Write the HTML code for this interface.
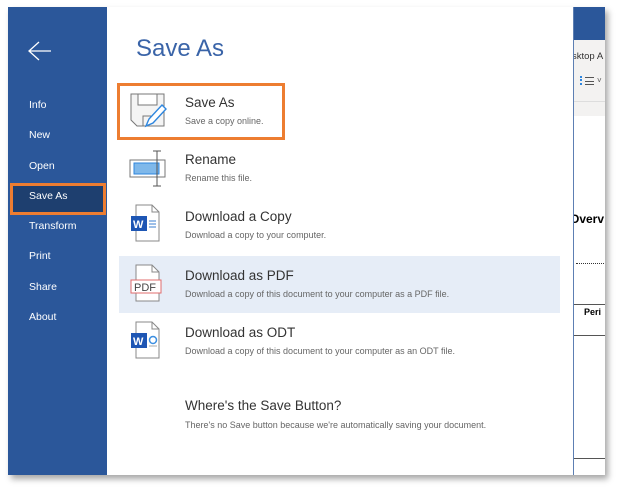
<!DOCTYPE html>
<html><head><style>
*{margin:0;padding:0;box-sizing:border-box}
body{width:617px;height:487px;background:#fff;position:relative;overflow:hidden;font-family:"Liberation Sans",sans-serif}
.frame{position:absolute;left:8px;top:7px;width:597px;height:468px;box-shadow:3px 4px 6px rgba(0,0,0,.35);background:#fff;overflow:hidden}
.side{position:absolute;left:0;top:0;width:99px;height:468px;background:#2b579a}
.side .it{position:absolute;left:21px;color:#fff;font-size:10.5px}
.sel{position:absolute;left:2px;top:176px;width:96px;height:32px;background:#1e3f6f;border:3px solid #ed7d31}
.main{position:absolute;left:99px;top:0;width:466px;height:468px;background:#fff}
h1{position:absolute;left:29px;top:28px;font-weight:normal;font-size:24px;color:#3a64a8}
.row{position:absolute;left:12px;width:441px;height:57px}
.row .t{position:absolute;left:66px;top:12px;font-size:13.5px;color:#333}
.row .s{position:absolute;left:66px;top:33px;font-size:9px;color:#666}
.right{position:absolute;left:565px;top:0;width:32px;height:468px;background:#fff;border-left:1px solid #5d7fb3;overflow:hidden}
</style></head><body>
<div class="frame">
<div class="side">
<svg style="position:absolute;left:20px;top:34px" width="24" height="20"><path d="M1 10H23M11 1L1 10L11 19" fill="none" stroke="#fff" stroke-width="1.3"/></svg>
<div class="it" style="top:92px">Info</div>
<div class="it" style="top:122px">New</div>
<div class="it" style="top:153px">Open</div>
<div class="sel"></div>
<div class="it" style="top:183px">Save As</div>
<div class="it" style="top:213px">Transform</div>
<div class="it" style="top:243px">Print</div>
<div class="it" style="top:274px">Share</div>
<div class="it" style="top:304px">About</div>
</div>
<div class="main">
<h1>Save As</h1>
<div class="row" style="top:76px;left:10px;width:168px;height:57px;border:3px solid #ed7d31"></div>
<div class="row" style="top:76px">
<svg style="position:absolute;left:10px;top:9px" width="40" height="40"><path d="M2 2H35V34H8L2 28Z M9 2V13H28V2" fill="#f4f4f4" stroke="#777" stroke-width="1"/><path d="M14 34L14 24H22" fill="none" stroke="#777"/><path d="M17 34L20 27L33 13L37 17L24 31Z" fill="#fff" stroke="#2e86de" stroke-width="1.4"/></svg>
<div class="t">Save As</div><div class="s">Save a copy online.</div></div>
<div class="row" style="top:133px">
<svg style="position:absolute;left:10px;top:10px" width="40" height="40"><rect x="1" y="10" width="35" height="17" fill="#fff" stroke="#777"/><rect x="5" y="13" width="25" height="11" fill="#7fb8ea" stroke="#2e86de"/><path d="M28 1V36M24 1H32M24 36H32" stroke="#555" fill="none"/></svg>
<div class="t">Rename</div><div class="s">Rename this file.</div></div>
<div class="row" style="top:190px">
<svg style="position:absolute;left:10px;top:7px" width="40" height="42"><path d="M7 1H23L30 8V37H7Z" fill="#fff" stroke="#888"/><path d="M23 1V8H30" fill="none" stroke="#888"/><rect x="2" y="12" width="16" height="15" fill="#1e56b4"/><text x="4" y="24" fill="#fff" font-size="11" font-weight="bold" font-family="Liberation Sans">W</text><path d="M20 17H27M20 20H27M20 23H27" stroke="#3b7fd0"/></svg>
<div class="t">Download a Copy</div><div class="s">Download a copy to your computer.</div></div>
<div class="row" style="top:249px;background:#e6edf7">
<svg style="position:absolute;left:10px;top:8px" width="40" height="42"><path d="M7 1H23L30 8V37H7Z" fill="#fff" stroke="#888"/><path d="M23 1V8H30" fill="none" stroke="#888"/><rect x="2" y="16" width="30" height="13" fill="#fff" stroke="#e06c6c"/><text x="5" y="27" fill="#444" font-size="11" font-family="Liberation Sans">PDF</text></svg>
<div class="t">Download as PDF</div><div class="s">Download a copy of this document to your computer as a PDF file.</div></div>
<div class="row" style="top:306px">
<svg style="position:absolute;left:10px;top:8px" width="40" height="42"><path d="M7 1H23L30 8V37H7Z" fill="#fff" stroke="#888"/><path d="M23 1V8H30" fill="none" stroke="#888"/><rect x="2" y="12" width="16" height="15" fill="#1e56b4"/><text x="4" y="24" fill="#fff" font-size="11" font-weight="bold" font-family="Liberation Sans">W</text><circle cx="24" cy="19" r="3.5" fill="none" stroke="#3b8ee0" stroke-width="1.5"/><path d="M20 25H28" stroke="#aaa"/></svg>
<div class="t">Download as ODT</div><div class="s">Download a copy of this document to your computer as an ODT file.</div></div>
<div class="row" style="top:378px">
<div class="t" style="top:13px">Where's the Save Button?</div><div class="s" style="top:35px">There's no Save button because we're automatically saving your document.</div></div>
</div>
<div class="right">
<div style="height:33px;background:#2b579a"></div>
<div style="height:62px;background:#f3f2f1;border-bottom:1px solid #ddd;position:relative;font-size:9.5px;color:#333">
<div style="position:absolute;left:-2px;top:11px;white-space:nowrap">sktop A</div>
<div style="position:absolute;left:6px;top:36px;width:5px;height:9px;border-left:2px dotted #2e86de"></div>
<div style="position:absolute;left:11px;top:37px;width:9px;height:8px;border-top:1px solid #555;border-bottom:1px solid #555"></div>
<div style="position:absolute;left:11px;top:41px;width:9px;border-top:1px solid #555"></div>
<div style="position:absolute;left:23px;top:36px;font-size:8px;color:#555">˅</div>
</div>
<div style="height:14px;background:#f3f2f1"></div>
<div style="position:absolute;top:205px;left:-4px;font-size:12px;font-weight:bold;white-space:nowrap">Overv</div>
<div style="position:absolute;top:256px;left:2px;width:30px;border-top:1px dotted #333"></div>
<div style="position:absolute;top:297px;left:0;width:32px;border-top:1px solid #555"></div>
<div style="position:absolute;top:300px;left:10px;font-size:9px;font-weight:bold">Peri</div>
<div style="position:absolute;top:328px;left:0;width:32px;border-top:1px solid #555"></div>
<div style="position:absolute;top:451px;left:0;width:32px;border-top:1px solid #555"></div>
</div>
</div>
</body></html>
